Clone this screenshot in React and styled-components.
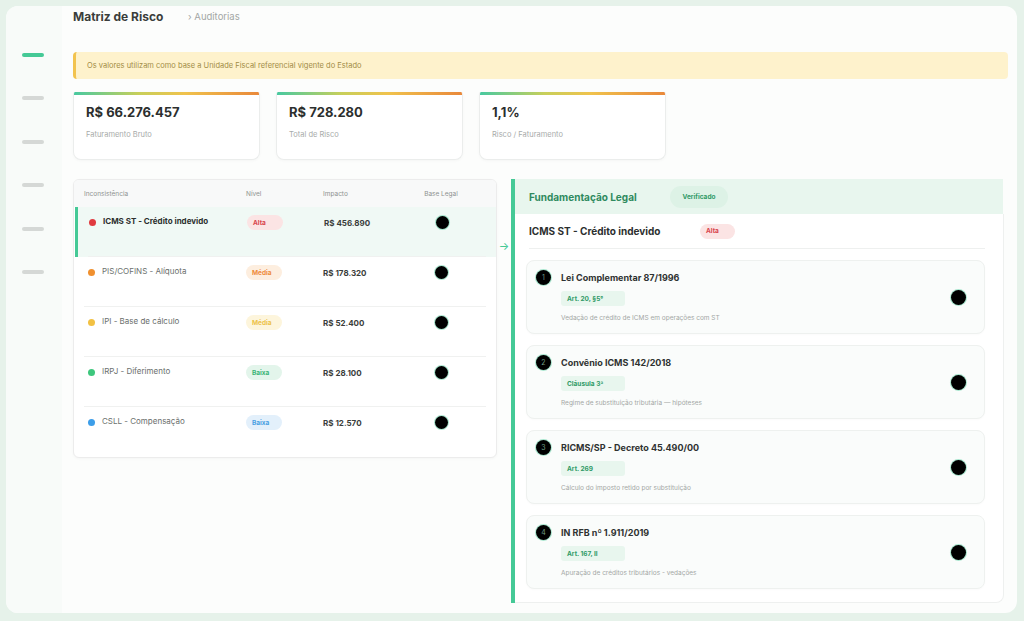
import styled, { createGlobalStyle } from 'styled-components'

const GlobalStyle = createGlobalStyle`
  html, body { margin: 0; padding: 0; }
  body {
    background: #e6f2ea;
    font-family: "Inter", "Noto Sans", sans-serif;
    color: #2b2f2d;
  }
  * { box-sizing: border-box; }
`

const Shell = styled.div`
  width: 1024px;
  height: 621px;
  padding: 6px 7px 8px 6px;
`
const Frame = styled.div`
  height: 100%;
  display: flex;
  background: #fcfdfc;
  border-radius: 12px;
  overflow: hidden;
`
const Sidebar = styled.nav`
  width: 56px;
  background: #f8fbf9;
  display: flex;
  flex-direction: column;
  padding: 47px 0 0 16px;
  gap: 39.4px;
`
const NavLine = styled.span`
  display: block;
  width: 22px;
  height: 4px;
  border-radius: 2px;
  background: ${p => (p.$active ? '#45c996' : '#d5d8d6')};
`
const Main = styled.main`
  flex: 1;
  padding: 0 9px 0 11px;
  display: flex;
  flex-direction: column;
`
const Header = styled.header`
  height: 20px;
  display: flex;
  align-items: center;
`
const PageTitle = styled.h1`
  margin: 0;
  font-size: 12px;
  font-weight: 700;
  color: #3a3d3b;
  width: 115px;
`
const Crumb = styled.span`
  font-size: 9.5px;
  color: #a3a7a5;
`
const Alert = styled.div`
  margin-top: 26px;
  height: 27px;
  display: flex;
  align-items: center;
  padding-left: 11px;
  background: #fef2cc;
  border-left: 3px solid #f2c34e;
  border-radius: 4px;
  font-size: 7.5px;
  color: #a28c45;
`
const Stats = styled.div`
  margin-top: 13px;
  display: flex;
  gap: 16px;
`
const StatCard = styled.div`
  width: 187px;
  height: 68px;
  background: #fff;
  border: 1px solid #ebedec;
  border-top: none;
  border-radius: 2px 2px 8px 8px;
  box-shadow: 0 1px 3px rgba(0, 0, 0, 0.03);
  overflow: hidden;
`
const StatBar = styled.div`
  height: 3px;
  background: linear-gradient(90deg, #48c9a0 0%, #c8cf5a 35%, #f0c24c 60%, #e9883a 100%);
`
const StatBody = styled.div`
  padding: 9px 12px 0;
`
const StatValue = styled.div`
  font-size: 13px;
  font-weight: 700;
  line-height: 16px;
  color: #2c2f2e;
`
const StatLabel = styled.div`
  margin-top: 10px;
  font-size: 7.5px;
  color: #a8abaa;
`
const Lower = styled.div`
  margin-top: 19px;
  display: flex;
  align-items: flex-start;
`
const Table = styled.div`
  width: 424px;
  background: #fff;
  border: 1px solid #ececec;
  border-radius: 6px;
  overflow: hidden;
  box-shadow: 0 1px 3px rgba(0, 0, 0, 0.03);
`
const Grid = styled.div`
  display: grid;
  grid-template-columns: 162px 77px 86px 64px;
  align-items: start;
`
const HeadRow = styled(Grid)`
  height: 27px;
  align-items: center;
  padding-left: 10px;
  background: #f8f9f9;
  font-size: 6.5px;
  color: #8e9290;
`
const HeadCell = styled.div`
  text-align: ${p => (p.$center ? 'center' : 'left')};
`
const Row = styled.div`
  height: 50px;
  padding-left: ${p => (p.$selected ? '7px' : '10px')};
  margin-left: ${p => (p.$selected ? '1px' : '0')};
  border-left: ${p => (p.$selected ? '3px solid #45c996' : 'none')};
  background: ${p => (p.$selected ? '#f0f9f5' : 'transparent')};
  position: relative;
  &:not(:last-child)::after {
    content: '';
    position: absolute;
    left: 10px;
    right: 10px;
    bottom: 0;
    height: 1px;
    background: #f0f1f0;
  }
`
const RowGrid = styled(Grid)`
  padding-top: 8px;
`
const NameCell = styled.div`
  display: flex;
  align-items: center;
  gap: 7px;
  font-size: 8px;
  font-weight: ${p => (p.$bold ? 700 : 400)};
  color: ${p => (p.$bold ? '#2c2f2e' : '#6b6f6d')};
  padding-top: 1px;
  padding-left: 4px;
`
const Dot = styled.span`
  width: 7px;
  height: 7px;
  border-radius: 50%;
  background: ${p => p.$color};
  margin-top: 2px;
`
const BadgeCell = styled.div`
  display: flex;
`
const Badge = styled.span`
  display: flex;
  align-items: center;
  height: 15px;
  width: ${p => p.$w || '36px'};
  padding-left: 6px;
  border-radius: 8px;
  font-size: 6.5px;
  font-weight: 700;
  background: ${p => p.$bg};
  color: ${p => p.$fg};
`
const Amount = styled.div`
  font-size: 8px;
  font-weight: 700;
  color: #3a3d3b;
  padding-top: 3px;
`
const CircleCell = styled.div`
  display: flex;
  justify-content: center;
  padding-top: 1px;
`
const BlackDot = styled.span`
  display: block;
  width: ${p => p.$size || 13}px;
  height: ${p => p.$size || 13}px;
  border-radius: 50%;
  background: #000;
  box-shadow: 0 0 0 1px rgba(69, 201, 150, 0.45);
`
const Arrow = styled.div`
  width: 14px;
  padding-top: 60px;
  text-align: center;
  color: #45c996;
  font-size: 11px;
`
const Panel = styled.section`
  width: 493px;
  height: 424px;
  border-left: 4px solid #45c996;
  display: flex;
  flex-direction: column;
`
const PanelHead = styled.div`
  height: 35px;
  display: flex;
  align-items: center;
  padding-left: 14px;
  background: #e8f6ee;
  margin-right: 1px;
`
const PanelTitle = styled.h2`
  margin: 0;
  font-size: 10px;
  font-weight: 700;
  color: #2f8a5e;
  width: 141px;
`
const Pill = styled.span`
  height: 22px;
  width: 58px;
  border-radius: 11px;
  display: inline-flex;
  align-items: center;
  justify-content: center;
  background: #ddf2e6;
  color: #2f9a66;
  font-size: 6.5px;
  font-weight: 700;
`
const PanelBody = styled.div`
  flex: 1;
  background: #fff;
  border: 1px solid #eef0ef;
  border-left: none;
  border-top: none;
  border-radius: 0 0 8px 0;
  padding: 0 18px 0 11px;
`
const CaseHead = styled.div`
  height: 35px;
  display: flex;
  align-items: center;
  margin-left: 3px;
  border-bottom: 1px solid #eef0ef;
`
const CaseTitle = styled.h3`
  margin: 0;
  font-size: 10px;
  font-weight: 700;
  color: #2c2f2e;
  width: 171px;
`
const LawList = styled.div`
  margin-top: 11px;
  display: flex;
  flex-direction: column;
  gap: 11px;
`
const LawCard = styled.div`
  height: 74px;
  border: 1px solid #eef1ef;
  border-radius: 8px;
  background: #fafcfb;
  display: flex;
  align-items: flex-start;
  padding: 9px 18px 0 9px;
  box-shadow: 0 1px 2px rgba(0, 0, 0, 0.02);
`
const Num = styled.span`
  width: 15px;
  height: 15px;
  border-radius: 50%;
  background: #000;
  box-shadow: 0 0 0 1px rgba(69, 201, 150, 0.45);
  color: #6f9c85;
  font-size: 7px;
  display: inline-flex;
  align-items: center;
  justify-content: center;
  flex-shrink: 0;
`
const LawText = styled.div`
  flex: 1;
  margin-left: 10px;
  display: flex;
  flex-direction: column;
  align-items: flex-start;
`
const LawTitle = styled.div`
  font-size: 9px;
  font-weight: 700;
  color: #2f3231;
  line-height: 15px;
`
const LawTag = styled.span`
  margin-top: 6px;
  height: 15px;
  width: 64px;
  display: inline-flex;
  align-items: center;
  padding-left: 6px;
  border-radius: 3px;
  background: #e8f6ee;
  color: #2f9a66;
  font-size: 6.5px;
  font-weight: 700;
`
const LawDesc = styled.div`
  margin-top: 8px;
  font-size: 6.5px;
  color: #a3a7a5;
`
const LawAction = styled.div`
  align-self: center;
  margin-top: -8px;
`

const badgeStyles = {
  alta: { bg: '#fbe4e4', fg: '#d8434b', label: 'Alta' },
  mediaO: { bg: '#fdeedf', fg: '#ee8b3c', label: 'Média' },
  mediaY: { bg: '#fdf5dc', fg: '#ecc24a', label: 'Média' },
  baixaG: { bg: '#e3f5eb', fg: '#3bb477', label: 'Baixa' },
  baixaB: { bg: '#e3f0fb', fg: '#4a9fe2', label: 'Baixa' },
}

const rows = [
  { name: 'ICMS ST - Crédito indevido', dot: '#e03b3f', level: 'alta', amount: 'R$ 456.890', selected: true },
  { name: 'PIS/COFINS - Alíquota', dot: '#f0902f', level: 'mediaO', amount: 'R$ 178.320' },
  { name: 'IPI - Base de cálculo', dot: '#f2c143', level: 'mediaY', amount: 'R$ 52.400' },
  { name: 'IRPJ - Diferimento', dot: '#3ec77d', level: 'baixaG', amount: 'R$ 28.100' },
  { name: 'CSLL - Compensação', dot: '#3d9ee9', level: 'baixaB', amount: 'R$ 12.570' },
]

const laws = [
  { title: 'Lei Complementar 87/1996', tag: 'Art. 20, §5°', desc: 'Vedação de crédito de ICMS em operações com ST' },
  { title: 'Convênio ICMS 142/2018', tag: 'Cláusula 3ª', desc: 'Regime de substituição tributária — hipóteses' },
  { title: 'RICMS/SP - Decreto 45.490/00', tag: 'Art. 269', desc: 'Cálculo do imposto retido por substituição' },
  { title: 'IN RFB nº 1.911/2019', tag: 'Art. 167, II', desc: 'Apuração de créditos tributários - vedações' },
]

const stats = [
  { value: 'R$ 66.276.457', label: 'Faturamento Bruto' },
  { value: 'R$ 728.280', label: 'Total de Risco' },
  { value: '1,1%', label: 'Risco / Faturamento' },
]

export default function App() {
  return (
    <>
      <GlobalStyle />
      <Shell>
        <Frame>
          <Sidebar>
            <NavLine $active />
            <NavLine />
            <NavLine />
            <NavLine />
            <NavLine />
            <NavLine />
          </Sidebar>
          <Main>
            <Header>
              <PageTitle>Matriz de Risco</PageTitle>
              <Crumb>› Auditorias</Crumb>
            </Header>
            <Alert>Os valores utilizam como base a Unidade Fiscal referencial vigente do Estado</Alert>
            <Stats>
              {stats.map(s => (
                <StatCard key={s.label}>
                  <StatBar />
                  <StatBody>
                    <StatValue>{s.value}</StatValue>
                    <StatLabel>{s.label}</StatLabel>
                  </StatBody>
                </StatCard>
              ))}
            </Stats>
            <Lower>
              <Table>
                <HeadRow>
                  <HeadCell>Inconsistência</HeadCell>
                  <HeadCell>Nível</HeadCell>
                  <HeadCell>Impacto</HeadCell>
                  <HeadCell $center>Base Legal</HeadCell>
                </HeadRow>
                {rows.map(r => {
                  const b = badgeStyles[r.level]
                  return (
                    <Row key={r.name} $selected={r.selected}>
                      <RowGrid>
                        <NameCell $bold={r.selected}>
                          <Dot $color={r.dot} />
                          {r.name}
                        </NameCell>
                        <BadgeCell>
                          <Badge $bg={b.bg} $fg={b.fg}>{b.label}</Badge>
                        </BadgeCell>
                        <Amount>{r.amount}</Amount>
                        <CircleCell>
                          <BlackDot />
                        </CircleCell>
                      </RowGrid>
                    </Row>
                  )
                })}
              </Table>
              <Arrow>→</Arrow>
              <Panel>
                <PanelHead>
                  <PanelTitle>Fundamentação Legal</PanelTitle>
                  <Pill>Verificado</Pill>
                </PanelHead>
                <PanelBody>
                  <CaseHead>
                    <CaseTitle>ICMS ST - Crédito indevido</CaseTitle>
                    <Badge $bg="#fbe4e4" $fg="#d8434b" $w="35px">Alta</Badge>
                  </CaseHead>
                  <LawList>
                    {laws.map((l, i) => (
                      <LawCard key={l.title}>
                        <Num>{i + 1}</Num>
                        <LawText>
                          <LawTitle>{l.title}</LawTitle>
                          <LawTag>{l.tag}</LawTag>
                          <LawDesc>{l.desc}</LawDesc>
                        </LawText>
                        <LawAction>
                          <BlackDot $size={15} />
                        </LawAction>
                      </LawCard>
                    ))}
                  </LawList>
                </PanelBody>
              </Panel>
            </Lower>
          </Main>
        </Frame>
      </Shell>
    </>
  )
}
